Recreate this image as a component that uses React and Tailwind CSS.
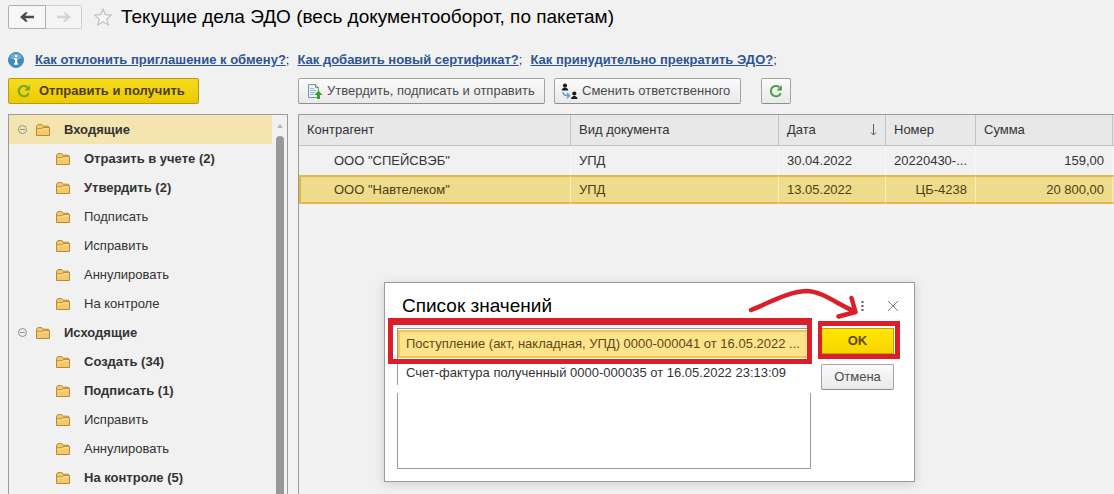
import React from 'react';

const TREE = [
  {
    title: 'Входящие',
    selected: true,
    items: [
      { label: 'Отразить в учете (2)', bold: true },
      { label: 'Утвердить (2)', bold: true },
      { label: 'Подписать' },
      { label: 'Исправить' },
      { label: 'Аннулировать' },
      { label: 'На контроле' },
    ],
  },
  {
    title: 'Исходящие',
    items: [
      { label: 'Создать (34)', bold: true },
      { label: 'Подписать (1)', bold: true },
      { label: 'Исправить' },
      { label: 'Аннулировать' },
      { label: 'На контроле (5)', bold: true },
    ],
  },
];

const LINKS = [
  'Как отклонить приглашение к обмену?',
  'Как добавить новый сертификат?',
  'Как принудительно прекратить ЭДО?',
];

const ROWS = [
  { partner: 'ООО "СПЕЙСВЭБ"', kind: 'УПД', date: '30.04.2022', number: '20220430-...', sum: '159,00' },
  { partner: 'ООО "Навтелеком"', kind: 'УПД', date: '13.05.2022', number: 'ЦБ-4238', sum: '20 800,00', selected: true },
];

const FolderIcon = () => (
  <svg className="h-3 w-[14px] shrink-0" viewBox="0 0 14 12" fill="none">
    <path d="M.5 11.5V2.2L1.8.6h4l1.4 1.6h5.1l1.2 1.2v8.1z" fill="#f3c96b" stroke="#b98a2e" />
    <path d="M.8 4.8h5l1.3-1.2h6.2" stroke="#b98a2e" />
    <path d="M1.2 6h5.2l1.2-1.2h5.2" stroke="#fbe3a0" />
  </svg>
);

const RefreshIcon = ({ className }) => (
  <svg className={className} viewBox="0 0 14 14" fill="none">
    <path d="M11.8 9.2A5.200 5.200 0 1 1 10.400 3.200" stroke="currentColor" strokeWidth="2" />
    <path d="M12.800 1v5.500H7.500z" fill="currentColor" />
  </svg>
);

const ArrowIcon = ({ className }) => (
  <svg className={className} viewBox="0 0 14 10" fill="currentColor">
    <path d="M0 5l5.500-4.800h2.300L5.200 3.800H14v2.400H5.200l2.600 3.600H5.500z" />
  </svg>
);

const StarIcon = () => (
  <svg className="h-[18px] w-[18px]" viewBox="0 0 18 18" fill="#f7f7f7" stroke="#c0c0c0" strokeWidth="1.2">
    <path d="M9 1l2.300 5.600 6 .5-4.600 3.900 1.500 5.900L9 13.700 3.800 16.900l1.500-5.900L.7 7.100l6-.5z" />
  </svg>
);

const InfoIcon = () => (
  <svg className="h-4 w-4 shrink-0" viewBox="0 0 16 16">
    <circle cx="8" cy="8" r="7.500" fill="#3d8dbb" stroke="#4a8db3" />
    <path d="M2 6a6.300 6.300 0 0 1 12 0c-3 2-9 2-12 0z" fill="#6cb0d4" />
    <path d="M7 3h2.200v2H7zM6 6.300h3.200v5h1v1.400H6v-1.400h1V7.700H6z" fill="#fff" />
  </svg>
);

const DocumentIcon = () => (
  <svg className="h-4 w-4" viewBox="0 0 16 16" fill="none">
    <path d="M1.500 1.500h7l3 3v10h-10z" fill="#eaf2f8" stroke="#7b95a8" />
    <path d="M8.500 1.500v3h3" stroke="#7b95a8" />
    <path d="M3 5.500h4M3 7.500h6M3 9.500h5M3 11.500h4" stroke="#9db7ca" />
    <path d="M11.500 7.500l4 4.500h-2.500v4h-3v-4H7.500z" fill="#36a32c" />
  </svg>
);

const PeopleIcon = () => (
  <svg className="h-[17px] w-[17px]" viewBox="0 0 17 17" fill="none">
    <circle cx="4" cy="2.500" r="2.100" fill="#1c1c1c" />
    <path d="M.8 7.500c0-2.500 1.700-2 2.200-3h2c.5 1 2.200.5 2.200 3z" fill="#1c1c1c" />
    <circle cx="13.300" cy="10.500" r="2.100" fill="#1c1c1c" />
    <path d="M10.100 16c0-2.500 1.700-2 2.200-3h2c.5 1 2.200.5 2.200 3z" fill="#1c1c1c" />
    <path d="M2 9c0 2.500 1.500 3.800 6 3.800M6 10.300l2.500 2.500L6 15.300" stroke="#5ba3d6" strokeWidth="1.500" />
  </svg>
);

const ToolButton = ({ className = '', children, ...props }) => (
  <button
    type="button"
    className={`flex h-[26px] items-center rounded-[2px] border border-[#a3a3a3] border-b-[#8d8d8d] bg-linear-to-b from-[#fbfbfb] to-[#e9e9e9] text-[#4a4a4a] ${className}`}
    {...props}
  >
    {children}
  </button>
);

const Tree = () => (
  <nav className="flex w-[280px] shrink-0 overflow-hidden border border-b-0 border-[#9b9b9b]">
    <ul className="flex-1">
      {TREE.map((group) => (
        <li key={group.title}>
          <div className={`flex h-[29px] items-center pl-[9px] font-bold ${group.selected ? 'bg-[#f4e4b0]' : ''}`}>
            <button type="button" aria-label="Свернуть" className="mr-[9px]">
              <svg className="h-[9px] w-[9px]" viewBox="0 0 9 9" fill="none" stroke="#8f8f8f">
                <circle cx="4.500" cy="4.500" r="4" />
                <path d="M2 4.500h5" />
              </svg>
            </button>
            <FolderIcon />
            <span className="ml-[14px]">{group.title}</span>
          </div>
          <ul>
            {group.items.map((item) => (
              <li key={item.label} className={`flex h-[29px] items-center gap-[14px] pl-[47px] ${item.bold ? 'font-bold' : ''}`}>
                <FolderIcon />
                {item.label}
              </li>
            ))}
          </ul>
        </li>
      ))}
    </ul>
    {/* Scrollbar */}
    <div className="flex w-[15px] flex-col items-center">
      <svg className="mt-[9px] h-1 w-[6px] shrink-0" viewBox="0 0 6 4">
        <path d="M3 0l3 4H0z" fill="#b5b5b5" />
      </svg>
      <div className="mt-2 w-2 flex-1 rounded-t bg-[#989898]" />
    </div>
  </nav>
);

const HeaderCell = ({ className = '', children }) => (
  <th className={`h-[31px] border-r border-b border-[#c2c2c2] px-2 text-left font-normal ${className}`}>{children}</th>
);

const DocumentsTable = () => (
  <div className="min-w-0 flex-1 border-t border-l border-[#9b9b9b]">
    <table className="w-full table-fixed border-separate border-spacing-0">
      <colgroup>
        <col />
        <col className="w-[208px]" />
        <col className="w-[107px]" />
        <col className="w-[90px]" />
        <col className="w-[137px]" />
        <col className="w-px" />
      </colgroup>
      <thead className="bg-[#e8e8e8]">
        <tr>
          <HeaderCell>Контрагент</HeaderCell>
          <HeaderCell>Вид документа</HeaderCell>
          <HeaderCell>
            <span className="flex items-center justify-between">
              Дата
              <svg className="h-3 w-[7px]" viewBox="0 0 7 12" fill="none" stroke="#5a5a5a">
                <path d="M3.500 0v11M1 8.500l2.500 2.500L6 8.500" />
              </svg>
            </span>
          </HeaderCell>
          <HeaderCell>Номер</HeaderCell>
          <HeaderCell>Сумма</HeaderCell>
          <th className="border-b border-[#c2c2c2] p-0" />
        </tr>
      </thead>
      <tbody>
        {ROWS.map((row) => (
          <tr
            key={row.partner}
            className={
              row.selected
                ? 'bg-[#eedc8c] text-[#4d3f12] *:border-y-2 *:border-y-[#e0b84a] *:not-last:border-r *:border-r-[#f6ecc0]'
                : '*:not-last:border-r *:border-r-[#f6f6f6]'
            }
          >
            <td className={`h-[29px] pr-2 ${row.selected ? 'border-l-2 border-l-[#e0b84a] pl-[33px]' : 'pl-[35px]'}`}>{row.partner}</td>
            <td className="px-2">{row.kind}</td>
            <td className="px-2">{row.date}</td>
            <td className="px-2 text-right whitespace-nowrap">{row.number}</td>
            <td className="pr-2 text-right">{row.sum}</td>
            <td className="p-0" />
          </tr>
        ))}
      </tbody>
    </table>
  </div>
);

const ValuesDialog = () => (
  <div
    role="dialog"
    aria-labelledby="values-title"
    className="absolute top-[282px] left-[384px] h-[200px] w-[531px] border border-[#9b9b9b] bg-white pr-5 pl-3 shadow-[0_2px_10px_rgba(0,0,0,0.15)]"
  >
    <div className="flex h-[45px] items-center pl-[5px]">
      <h2 id="values-title" className="flex-1 text-[19px] leading-6 text-black">Список значений</h2>
      <button type="button" aria-label="Ещё" className="mr-6">
        <svg className="h-3 w-[3px]" viewBox="0 0 3 12" fill="#5a5a5a">
          <path d="M.5 1h2v2h-2zM.5 5h2v2h-2zM.5 9h2v2h-2z" />
        </svg>
      </button>
      <button type="button" aria-label="Закрыть" className="-mr-1">
        <svg className="h-[10px] w-[10px]" viewBox="0 0 10 10" fill="none" stroke="#7d7d7d">
          <path d="M0 0l10 10M10 0L0 10" />
        </svg>
      </button>
    </div>

    <div className="flex justify-between">
      <div className="w-[414px]">
        <ul role="listbox" aria-labelledby="values-title" className="h-[57px] border-t border-l border-[#9b9b9b]">
          <li role="option" aria-selected="true" className="mt-px h-[28px] overflow-hidden border-2 border-r-0 border-[#f0c64b] bg-[#fce38c] pl-[6px] leading-6 whitespace-nowrap text-[#5c4a12]">
            Поступление (акт, накладная, УПД) 0000-000041 от 16.05.2022 ...
          </li>
          <li role="option" aria-selected="false" className="pl-2 leading-[29px]">
            Счет-фактура полученный 0000-000035 от 16.05.2022 23:13:09
          </li>
        </ul>
        <div className="mt-2 h-[76px] border border-t-0 border-[#9b9b9b]" />
      </div>
      <div className="flex w-[73px] flex-col gap-[10px]">
        <button type="button" className="h-[26px] border border-[#c9a400] bg-linear-to-b from-[#ffe600] to-[#f8d400] font-bold text-[#5c4a12]">
          OK
        </button>
        <ToolButton className="justify-center">Отмена</ToolButton>
      </div>
    </div>

    {/* Hand-drawn marks over the dialog */}
    <svg className="pointer-events-none absolute top-0 left-0 h-[198px] w-[529px]" viewBox="385 283 529 198" fill="none" stroke="#da1f2b">
      <path d="M388 318h424v46H388zM393 325v34h414v-34z" fill="#da1f2b" fillRule="evenodd" stroke="none" />
      <path d="M818 321h82v38h-82zM822 326v28h73v-28z" fill="#da1f2b" fillRule="evenodd" stroke="none" />
      <path d="M751 310c18-7 36-18 55-19 16 0 31 13 48 20M851.500 298l4 14-17 4.500" strokeWidth="4.500" strokeLinecap="round" strokeLinejoin="round" />
    </svg>
  </div>
);

const App = () => (
  <div className="relative flex h-screen flex-col overflow-hidden bg-[#f1f1f1] font-['Liberation_Sans',Arial,sans-serif] text-[13px] leading-4 text-[#333]">
    <header className="flex h-[34px] items-center pl-2">
      <div className="flex h-6">
        <button type="button" aria-label="Назад" className="flex w-[38px] items-center justify-center rounded-l-[2px] border border-[#b0b0b0] bg-[#f7f7f7]">
          <ArrowIcon className="h-[10px] w-[14px] text-[#4a4a4a]" />
        </button>
        <button type="button" aria-label="Вперед" className="flex w-9 items-center justify-center rounded-r-[2px] border border-l-0 border-[#cfcfcf] bg-[#f5f5f5]">
          <ArrowIcon className="h-[10px] w-[14px] rotate-180 text-[#d4d4d4]" />
        </button>
      </div>
      <button type="button" aria-label="В избранное" className="mr-[9px] ml-3">
        <StarIcon />
      </button>
      <h1 className="text-[19px] leading-6 text-black">Текущие дела ЭДО (весь документооборот, по пакетам)</h1>
    </header>

    <div className="mt-[17px] flex h-[18px] items-center gap-[11px] pl-2">
      <InfoIcon />
      <ul className="flex gap-2">
        {LINKS.map((link) => (
          <li key={link}>
            <a href="#" className="font-bold text-[#2d5591] underline">{link}</a>;
          </li>
        ))}
      </ul>
    </div>

    <div className="mt-[9px] flex pl-2">
      <div className="w-[290px]">
        <button
          type="button"
          className="flex h-[26px] w-[191px] items-center gap-2 rounded-[2px] border border-[#b59a1c] bg-linear-to-b from-[#f6dc1c] to-[#ecc900] pl-2 font-bold text-[#4d3f12]"
        >
          <RefreshIcon className="h-[14px] w-[14px] text-[#6aa81e]" />
          Отправить и получить
        </button>
      </div>
      <ToolButton className="w-[247px] gap-1 pl-2">
        <DocumentIcon />
        Утвердить, подписать и отправить
      </ToolButton>
      <ToolButton className="ml-[9px] w-[187px] gap-1 pl-[6px]">
        <PeopleIcon />
        Сменить ответственного
      </ToolButton>
      <ToolButton className="ml-5 w-[30px] justify-center" aria-label="Обновить">
        <RefreshIcon className="h-[14px] w-[14px] text-[#4ba046]" />
      </ToolButton>
    </div>

    <main className="mt-[10px] flex min-h-0 flex-1 gap-[10px] pl-2">
      <Tree />
      <DocumentsTable />
    </main>

    <ValuesDialog />
  </div>
);

export default App;
